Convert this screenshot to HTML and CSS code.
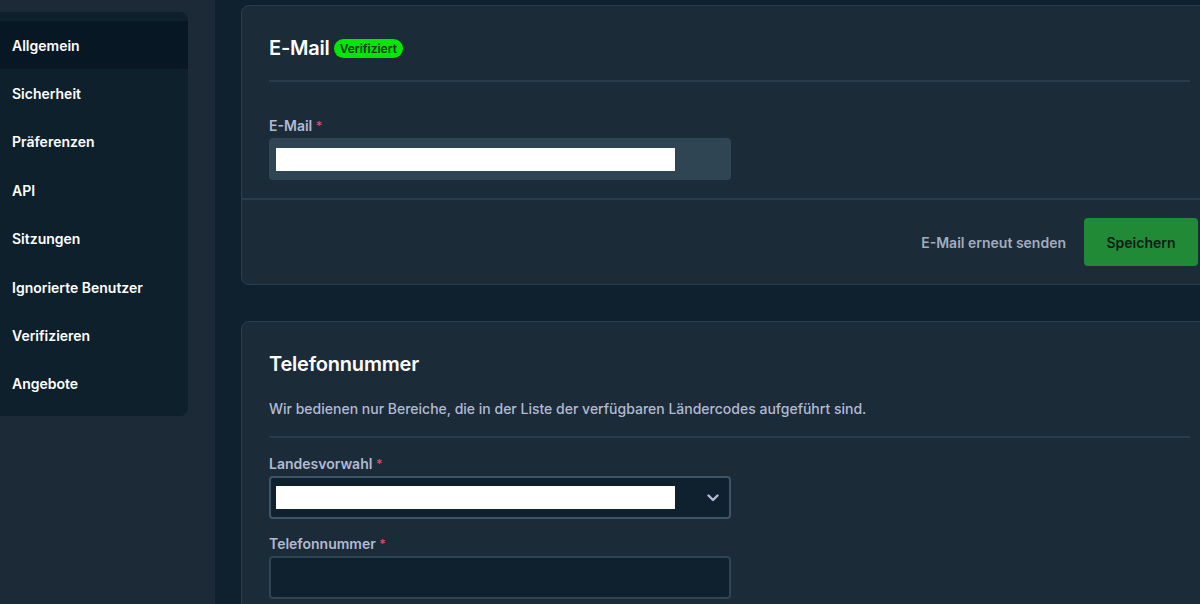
FILE: index.html
```html
<!DOCTYPE html>
<html lang="de">
<head>
<meta charset="utf-8">
<title>Einstellungen</title>
<link rel="stylesheet" href="styles.css">
</head>
<body>
<div class="page">
  <aside class="side">
    <nav class="menu">
      <a class="item active">Allgemein</a>
      <a class="item">Sicherheit</a>
      <a class="item">Präferenzen</a>
      <a class="item">API</a>
      <a class="item">Sitzungen</a>
      <a class="item">Ignorierte Benutzer</a>
      <a class="item">Verifizieren</a>
      <a class="item">Angebote</a>
    </nav>
  </aside>
  <main class="main">
    <section class="card card-email">
      <div class="card-head">
        <h2 class="title">E-Mail <span class="badge">Verifiziert</span></h2>
        <div class="rule"></div>
      </div>
      <div class="card-body">
        <label class="label">E-Mail <span class="req">*</span></label>
        <div class="input filled"><span class="redact"></span></div>
      </div>
      <div class="card-foot">
        <span class="link">E-Mail erneut senden</span>
        <button class="btn">Speichern</button>
      </div>
    </section>
    <section class="card card-phone">
      <div class="card-head">
        <h2 class="title">Telefonnummer</h2>
        <p class="desc">Wir bedienen nur Bereiche, die in der Liste der verfügbaren Ländercodes aufgeführt sind.</p>
        <div class="rule"></div>
      </div>
      <div class="card-body">
        <label class="label">Landesvorwahl <span class="req">*</span></label>
        <div class="input select"><span class="redact"></span>
          <svg class="chev" width="12" height="8" viewBox="0 0 12 8"><path d="M1.5 1.5 L6 6 L10.5 1.5" fill="none" stroke="#b1bad3" stroke-width="2.4" stroke-linecap="round" stroke-linejoin="round"/></svg>
        </div>
        <label class="label second">Telefonnummer <span class="req">*</span></label>
        <div class="input"></div>
      </div>
    </section>
  </main>
</div>
</body>
</html>
```
FILE: styles.css
```css
* { box-sizing: border-box; }
html, body { margin: 0; padding: 0; }
body {
  width: 1200px;
  height: 604px;
  overflow: hidden;
  background: #0f212e;
  font-family: "Inter", "Noto Sans", sans-serif;
  color: #fff;
}
.page { display: flex; height: 604px; }
.side {
  width: 215px;
  flex: none;
  background: #1b2a36;
  padding-top: 12px;
}
.menu {
  width: 188px;
  background: #0f202d;
  border-radius: 0 8px 8px 0;
  padding: 9px 0 8px;
  display: flex;
  flex-direction: column;
}
.item {
  height: 48.4px;
  display: flex;
  align-items: center;
  padding-left: 12px;
  font-size: 14px;
  font-weight: 600;
  color: #fff;
}
.item.active { background: #071824; }

.main {
  flex: none;
  width: 1010px;
  padding: 5px 0 0 26px;
  display: flex;
  flex-direction: column;
  gap: 36px;
}
.card {
  width: 977px;
  background: #1c2b38;
  border: 1px solid #2c3e4b;
  border-radius: 8px;
}
.card-head { padding: 28px 27px 0; }
.title {
  margin: 0;
  font-size: 20px;
  line-height: 28px;
  font-weight: 600;
  color: #fff;
  display: flex;
  align-items: center;
  gap: 4px;
  letter-spacing: -0.2px;
}
.badge {
  display: inline-block;
  background: #00e701;
  color: #05350a;
  font-size: 12px;
  font-weight: 600;
  line-height: 19px;
  padding: 0 6px;
  border-radius: 10px;
  margin-top: 1px;
  letter-spacing: 0;
}
.rule { height: 2px; background: #2a3c49; margin-top: 18px; width: 921px; }
.desc {
  margin: 21px 0 0;
  font-size: 14px;
  line-height: 20px;
  color: #b1bad3;
  font-weight: 500;
}
.card-phone .rule { margin-top: 17px; }
.card-body { padding: 34px 27px 18px; display: flex; flex-direction: column; }
.card-phone .card-body { padding-top: 16px; }
.label {
  font-size: 14px;
  line-height: 20px;
  font-weight: 600;
  color: #b1bad3;
  margin-bottom: 2px;
}
.label.second { margin-top: 15px; }
.req { color: #ed4163; font-size: 12px; vertical-align: top; }
.input {
  width: 462px;
  height: 43px;
  border: 2px solid #2f4553;
  border-radius: 4px;
  background: #0f212e;
  display: flex;
  align-items: center;
  padding-left: 5px;
}
.input.filled { background: #2f4553; height: 42px; }
.select { justify-content: space-between; padding-right: 10px; border-color: #3d5566; }
.redact { width: 399px; height: 23px; background: #fff; display: block; }
.chev { display: block; margin-top: 1px; }
.card-foot {
  border-top: 2px solid #2a3c49;
  height: 86px;
  display: flex;
  align-items: center;
  justify-content: flex-end;
  padding-right: 19px;
  gap: 18px;
}
.link { font-size: 14px; font-weight: 600; color: #a2acbf; }
.btn {
  font-family: inherit;
  width: 114px;
  height: 48px;
  border: none;
  border-radius: 4px;
  background: #218a36;
  color: #0b1b16;
  font-size: 14px;
  font-weight: 600;
}
```
